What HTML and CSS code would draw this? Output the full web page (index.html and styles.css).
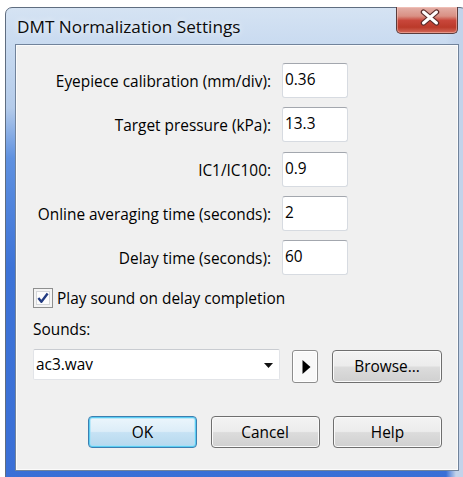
FILE: index.html
```html
<!DOCTYPE html>
<html lang="en">
<head>
<meta charset="utf-8">
<title>DMT Normalization Settings</title>
<link rel="stylesheet" href="styles.css">
</head>
<body>
<div class="window">
  <div class="titlebar">
    <span class="title">DMT Normalization Settings</span>
    <button class="close" type="button" aria-label="Close">
      <svg width="62" height="27" viewBox="0 0 62 27">
        <path d="M26.5 5 L39.5 16 M39.5 5 L26.5 16" stroke="#5a2a28" stroke-width="5.4" stroke-linecap="round"/>
        <path d="M26.5 5 L39.5 16 M39.5 5 L26.5 16" stroke="#ffffff" stroke-width="3" stroke-linecap="round"/>
      </svg>
    </button>
  </div>
  <div class="client">
    <div class="fields">
      <label class="field-label">Eyepiece calibration (mm/div):</label>
      <div class="textbox">0.36</div>
      <label class="field-label">Target pressure (kPa):</label>
      <div class="textbox">13.3</div>
      <label class="field-label">IC1/IC100:</label>
      <div class="textbox">0.9</div>
      <label class="field-label">Online averaging time (seconds):</label>
      <div class="textbox">2</div>
      <label class="field-label">Delay time (seconds):</label>
      <div class="textbox">60</div>
    </div>

    <label class="check-row">
      <span class="checkbox">
        <svg width="13" height="13" viewBox="0 0 13 13">
          <path d="M2.2 6.6 L5 10 L10.8 2.4" fill="none" stroke="#233c82" stroke-width="2.2" stroke-linejoin="round"/>
        </svg>
      </span>
      <span>Play sound on delay completion</span>
    </label>

    <div class="sounds-label">Sounds:</div>

    <div class="sound-row">
      <div class="combo">
        <span>ac3.wav</span>
        <svg class="combo-arrow" width="9" height="5" viewBox="0 0 9 5"><path d="M0 0 H9 L4.5 5 Z" fill="#111"/></svg>
      </div>
      <button class="play" type="button" aria-label="Play">
        <svg width="9" height="14" viewBox="0 0 9 14"><path d="M0.5 0 L8.5 7 L0.5 14 Z" fill="#000"/></svg>
      </button>
      <button class="btn browse" type="button">Browse...</button>
    </div>

    <div class="actions">
      <button class="btn default" type="button">OK</button>
      <button class="btn" type="button">Cancel</button>
      <button class="btn" type="button">Help</button>
    </div>
  </div>
</div>
</body>
</html>
```

FILE: styles.css
```css
html, body {
  margin: 0;
  padding: 0;
  background: #ffffff;
  overflow: hidden;
  width: 463px;
  height: 477px;
}

body {
  font-family: "Open Sans", "Noto Sans", sans-serif;
  font-size: 15.4px;
  color: #000;
}

/* Window frame with the glass-like gradient border */
.window {
  box-sizing: border-box;
  margin: 7px 0 0 5px;
  width: 462px;
  height: 480px;
  border: 1px solid #5f6d80;
  border-radius: 7px 7px 0 0;
  padding: 0 7px 0 9px;
  background:
    linear-gradient(to right, rgba(196, 212, 234, 0) 0, rgba(196, 212, 234, 0) 440px, #c2d3ea 450px),
    linear-gradient(to bottom, #d5e3f3 0, #c1d5ee 60px, #b4cbea 100px, #5f91e0 150px, #3d73d7 260px, #3a6fd6 100%);
}

.titlebar {
  height: 36px;
  display: flex;
  align-items: flex-start;
  justify-content: space-between;
}

.title {
  font-size: 17.2px;
  margin: 8px 0 0 2px;
  line-height: 22px;
  color: #0b0b0b;
  text-shadow: 0 0 6px rgba(255, 255, 255, 0.9);
}

.close {
  width: 62px;
  height: 27px;
  margin: -1px 1px 0 0;
  padding: 0;
  border: 1px solid #5a3c3c;
  border-top: none;
  border-radius: 0 0 5px 5px;
  background: linear-gradient(to bottom, #e3b0a8 0, #d99084 35%, #c8463a 52%, #bb3a2a 78%, #d36a5a 100%);
  box-shadow: inset 0 0 0 1px rgba(255, 210, 200, 0.45);
}

.close svg {
  display: block;
}

/* Client area */
.client {
  box-sizing: border-box;
  height: 427px;
  border: 1px solid #71839b;
  background: #f0f0f0;
  box-shadow: inset 0 0 0 1px #fbfbfb;
  padding: 18px 16px 0 17px;
  display: flex;
  flex-direction: column;
}

.fields {
  display: grid;
  grid-template-columns: 238px 66px;
  grid-auto-rows: 35px;
  column-gap: 11px;
  row-gap: 9.25px;
}

.field-label {
  align-self: center;
  justify-self: end;
  white-space: nowrap;
  line-height: 20px;
  margin-top: 3px;
}

.textbox {
  box-sizing: border-box;
  height: 35px;
  background: #ffffff;
  border: 1px solid #d7dbe1;
  border-top-color: #a3a7ae;
  border-radius: 3px;
  padding: 0 0 0 2px;
  line-height: 31px;
}

.check-row {
  display: flex;
  align-items: center;
  gap: 4px;
  height: 20px;
  margin-top: 13px;
  white-space: nowrap;
}

.checkbox {
  box-sizing: border-box;
  width: 20px;
  height: 20px;
  border: 1px solid #8e8f8f;
  background: #fdfdfd;
  display: flex;
  align-items: center;
  justify-content: center;
  box-shadow: inset 0 0 0 2px #f4f4f4, inset 0 0 0 3px #d5d7da;
}

.checkbox svg {
  width: 14px;
  height: 14px;
}

.sounds-label {
  margin-top: 12px;
  line-height: 20px;
}

.sound-row {
  display: flex;
  align-items: flex-start;
  margin-top: 9px;
}

.combo {
  box-sizing: border-box;
  width: 247px;
  height: 31px;
  background: #ffffff;
  border: 1px solid #e2e4e8;
  border-top-color: #c9ccd1;
  border-radius: 2px;
  display: flex;
  align-items: center;
  justify-content: space-between;
  padding: 0 6px 0 2px;
}

.combo-arrow {
  margin-top: 1px;
}

.play {
  box-sizing: border-box;
  width: 26px;
  height: 33px;
  margin: 1px 0 0 12px;
  padding: 0;
  border: 1px solid #8d8d8d;
  border-radius: 3px;
  background: #f8f8f8;
  box-shadow: inset 0 0 0 1px #ffffff;
  display: flex;
  align-items: center;
  justify-content: center;
}

.play svg {
  display: block;
  margin-left: 2px;
}

/* Push buttons */
.btn {
  box-sizing: border-box;
  width: 109px;
  height: 33px;
  padding: 0;
  font: inherit;
  color: #000;
  border: 1px solid #6f6f6f;
  border-radius: 4px;
  background: linear-gradient(to bottom, #f3f3f3 0, #ececec 48%, #dcdcdc 52%, #d0d0d0 100%);
  box-shadow: inset 0 0 0 1px #fafafa;
}

.browse {
  width: 110px;
  margin: 1px 0 0 14px;
}

.actions {
  display: flex;
  justify-content: flex-end;
  gap: 13.5px;
  margin-top: 33px;
}

.actions .btn {
  height: 32px;
}

.btn.default {
  border-color: #3c7fb1;
  background: linear-gradient(to bottom, #ecf6fc 0, #dcedf8 48%, #c6e2f4 52%, #b5d8ee 100%);
  box-shadow: inset 0 0 0 1px #5ccdf2, inset 0 0 0 2px rgba(160, 225, 248, 0.6);
}
```
